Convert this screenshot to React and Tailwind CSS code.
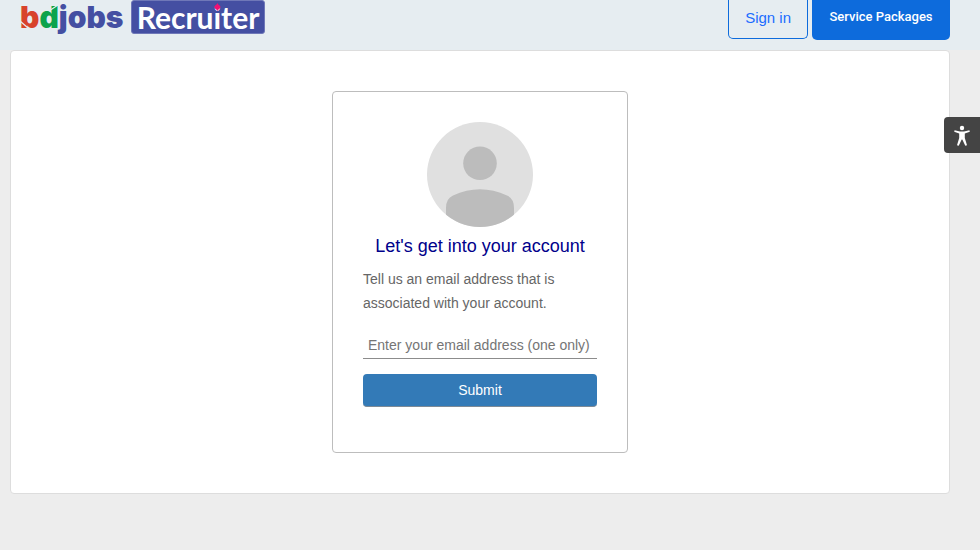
import React from "react";

function Logo() {
  return (
    <a href="#" aria-label="bdjobs Recruiter" className="flex items-start gap-2">
      <span className="relative block w-[103px] font-['Inter',sans-serif] text-[30px] leading-[34px] font-black text-[#444fa2]">
        <span className="text-[#d8432b]">b</span>
        <span className="text-[#0ca34c]">d</span>jobs
        <svg className="absolute top-0 left-0 h-[34px] w-[103px]" viewBox="0 0 103 34" fill="none" stroke="#e6edf1" strokeWidth="1.2" aria-hidden="true">
          <path d="M0 21 L8 28" />
          <path d="M29 11 L38 5" />
        </svg>
      </span>
      <span className="relative block h-[34px] w-[134px] rounded-[3px] border border-[#6f78b8] bg-[#444fa2] text-center font-['Lato',sans-serif] text-[30px] leading-[32px] font-bold text-white">
        Recruiter
        <svg className="absolute top-0 left-[79px] h-3 w-3" viewBox="0 0 12 12" aria-hidden="true">
          <circle cx="6.4" cy="6" r="2.6" fill="#ee1174" />
          <path d="M6.4 2 L7.8 4.6 L10 6 L7.8 7.4 L6.4 10 L5 7.4 L2.8 6 L5 4.6 Z" fill="#ee1174" />
        </svg>
      </span>
    </a>
  );
}

function Avatar() {
  return (
    <svg className="mx-auto block h-[105px] w-[106px]" viewBox="0 0 106 105" aria-hidden="true">
      <defs>
        <clipPath id="avatar-disc">
          <ellipse cx="53" cy="52.5" rx="53" ry="52.5" />
        </clipPath>
      </defs>
      <g clipPath="url(#avatar-disc)">
        <rect width="106" height="105" fill="#e0e0e0" />
        <circle cx="53" cy="41.3" r="16.8" fill="#bcbcbc" />
        <path d="M19 105 V86 Q19 76.5 26 73.5 Q53 61 80 73.5 Q87 76.5 87 86 V105 Z" fill="#bcbcbc" />
      </g>
    </svg>
  );
}

export default function App() {
  return (
    <div className="min-h-screen bg-[#ededed] font-['Liberation_Sans',Arial,sans-serif]">
      <header className="flex h-[50px] items-start justify-between bg-[#e6edf1] pr-[30px] pl-5">
        <Logo />
        <nav className="flex items-start gap-1">
          <button type="button" className="h-[39px] rounded-b-[5px] border border-t-0 border-[#0d6bdc] px-4 pb-[2px] text-[15px] text-[#1a6cff]">
            Sign in
          </button>
          <button type="button" className="h-10 w-[138px] rounded-b-[5px] bg-[#0d6bdc] pb-[6px] font-['Roboto',sans-serif] text-[13px] font-medium text-white">
            Service Packages
          </button>
        </nav>
      </header>

      <main className="mr-[30px] ml-[10px] rounded border border-[#dddddd] bg-white py-10">
        <form className="mx-auto w-[296px] rounded border border-[#bdbdbd] px-[30px] pt-[30px] pb-[45px]" onSubmit={(e) => e.preventDefault()}>
          <Avatar />
          <h1 className="mt-2 text-center text-[18px] leading-[22px] text-[#00008b]">Let's get into your account</h1>
          <label htmlFor="email" className="mt-[10px] block text-[14px] leading-[24px] text-[#666666]">
            Tell us an email address that is associated with your account.
          </label>
          <input
            id="email"
            type="email"
            placeholder="Enter your email address (one only)"
            className="mt-4 block h-7 w-full border-b border-[#8c8c8c] px-[5px] text-[14px] text-[#555555] placeholder:text-[#757575] focus:outline-none"
          />
          <button type="submit" className="mt-[15px] block h-[33px] w-full rounded border-b border-[#7d8a96] bg-[#337ab7] text-[14px] text-white">
            Submit
          </button>
        </form>
      </main>

      <button type="button" aria-label="Accessibility options" className="fixed top-[117px] right-0 flex h-9 w-9 items-center justify-center rounded-l bg-[#444444]">
        <svg className="h-6 w-6" viewBox="0 0 24 24" fill="#ffffff" aria-hidden="true">
          <circle cx="12" cy="5" r="2.2" />
          <path d="M4.6 7.2 L10 8.4 H14 L19.4 7.2 L19.8 8.8 L14.8 10.6 V15 L17 22.2 L15.3 22.8 L12.3 16.6 H11.7 L8.7 22.8 L7 22.2 L9.2 15 V10.6 L4.2 8.8 Z" />
        </svg>
      </button>
    </div>
  );
}
